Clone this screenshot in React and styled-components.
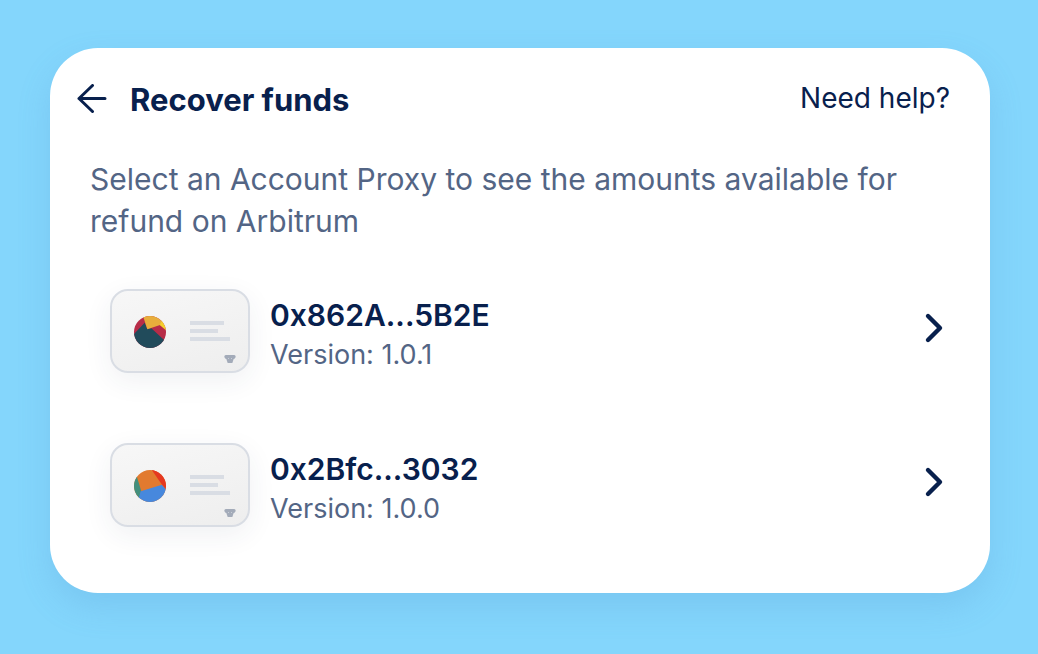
import React from "react";
import styled, { createGlobalStyle } from "styled-components";

const GlobalStyle = createGlobalStyle`
  *, *::before, *::after { box-sizing: border-box; }
  body {
    margin: 0;
    min-height: 100vh;
    background: #84d6fc;
    color: #08204d;
    font-family: Inter, "Liberation Sans", sans-serif;
  }
`;

const Page = styled.main`
  padding: 48px 48px 60px 50px;
`;

const Panel = styled.section`
  padding: 28px 40px 31px;
  border-radius: 48px;
  background: #fff;
  box-shadow: 0 14px 32px rgba(84, 144, 204, 0.22);
`;

const Header = styled.header`
  display: flex;
  align-items: center;
  gap: 22px;
  height: 48px;
  margin-left: -14px;
`;

const BackButton = styled.button`
  display: flex;
  width: 32px;
  height: 32px;
  padding: 0;
  border: 0;
  background: none;
  color: inherit;
  cursor: pointer;
`;

const Title = styled.h1`
  margin: 0;
  font-size: 31px;
  line-height: 48px;
  font-weight: 700;
`;

const HelpLink = styled.a`
  margin-left: auto;
  padding-bottom: 4px;
  color: inherit;
  font-size: 28px;
  line-height: 40px;
  text-decoration: none;
`;

const Intro = styled.p`
  margin: 34px 0 12px;
  color: #536585;
  font-size: 30px;
  line-height: 42px;
`;

const List = styled.ul`
  margin: 0;
  padding: 0;
  list-style: none;
`;

const Row = styled.button`
  display: flex;
  align-items: center;
  gap: 20px;
  width: 100%;
  height: 154px;
  padding: 0 0 0 20px;
  border: 0;
  background: none;
  color: inherit;
  font: inherit;
  text-align: left;
  cursor: pointer;
`;

const Thumb = styled.span`
  position: relative;
  display: flex;
  align-items: center;
  gap: 24px;
  flex: none;
  width: 140px;
  height: 84px;
  padding-left: 22px;
  border: 2px solid #d9dde4;
  border-radius: 18px;
  background: linear-gradient(165deg, #f7f7f7, #eeeeee);
  box-shadow: 0 8px 28px rgba(40, 50, 90, 0.07);
`;

const Picture = styled.svg`
  flex: none;
  margin-top: 2px;
`;

const Lines = styled.span`
  display: grid;
  gap: 4px;
`;

const Line = styled.span`
  width: ${({ $width }) => $width}px;
  height: 4px;
  background: #d9dde4;
`;

const Mascot = styled.svg`
  position: absolute;
  right: 12px;
  bottom: 8px;
`;

const Details = styled.span`
  display: flex;
  flex-direction: column;
  flex: 1;
  padding-top: 8px;
`;

const Name = styled.span`
  font-size: 30px;
  line-height: 40px;
  font-weight: 600;
`;

const Version = styled.span`
  color: #536585;
  font-size: 27px;
  line-height: 40px;
`;

const Chevron = styled.svg`
  flex: none;
  margin-bottom: 6px;
`;

const accounts = [
  {
    name: "0x862A...5B2E",
    version: "1.0.1",
    base: "#b72c48",
    shapes: [
      ["#214b5b", "0,54 32,20 40,39 52,37 96,77 96,96 0,96"],
      ["#e8ae3c", "27,0 40,40 78,27 90,20 90,0"],
      ["#f5cf2d", "77,27 98,44 96,10 86,10"],
    ],
  },
  {
    name: "0x2Bfc...3032",
    version: "1.0.0",
    base: "#e27a2f",
    shapes: [
      ["#438f7d", "8,18 22,64 13,96 0,96 0,18"],
      ["#4788dd", "20,64 84,44 98,60 96,96 11,96"],
      ["#e53820", "52,-2 84,44 98,60 98,-2"],
    ],
  },
];

function Avatar({ id, base, shapes }) {
  return (
    <Picture width="32" height="32" viewBox="0 0 96 96" aria-hidden="true">
      <clipPath id={id}>
        <circle cx="48" cy="48" r="48" />
      </clipPath>
      <g clipPath={`url(#${id})`}>
        <rect width="96" height="96" fill={base} />
        {shapes.map(([fill, points]) => (
          <polygon key={fill} fill={fill} points={points} />
        ))}
      </g>
    </Picture>
  );
}

function AccountRow({ account, id }) {
  return (
    <li>
      <Row type="button">
        <Thumb>
          <Avatar id={id} base={account.base} shapes={account.shapes} />
          <Lines>
            <Line $width={34} />
            <Line $width={28} />
            <Line $width={40} />
          </Lines>
          <Mascot width="12" height="8" viewBox="0 0 36 24" aria-hidden="true">
            <path
              d="M5 0H31Q36 1 35 6Q33 12 29 12L27 18L25 24H11L9 18L7 12Q3 12 1 6Q0 1 5 0Z"
              fill="#a3abb9"
            />
            <circle cx="13.5" cy="10.5" r="1.4" fill="#eef0f3" />
            <circle cx="22.5" cy="10.5" r="1.4" fill="#eef0f3" />
          </Mascot>
        </Thumb>
        <Details>
          <Name>{account.name}</Name>
          <Version>Version: {account.version}</Version>
        </Details>
        <Chevron width="32" height="32" viewBox="0 0 32 32" fill="none" aria-hidden="true">
          <path
            d="M10 4L22 16L10 28"
            stroke="currentColor"
            strokeWidth="4.4"
            strokeLinecap="round"
            strokeLinejoin="round"
          />
        </Chevron>
      </Row>
    </li>
  );
}

export default function App() {
  return (
    <>
      <GlobalStyle />
      <Page>
        <Panel>
          <Header>
            <BackButton type="button" aria-label="Back">
              <svg width="32" height="32" viewBox="0 0 32 32" fill="none" aria-hidden="true">
                <path
                  d="M16.5 1.5L3 14.5L16.5 27.5M3 14.5H29"
                  stroke="currentColor"
                  strokeWidth="3"
                  strokeLinecap="round"
                  strokeLinejoin="round"
                />
              </svg>
            </BackButton>
            <Title>Recover funds</Title>
            <HelpLink href="#help">Need help?</HelpLink>
          </Header>
          <Intro>
            Select an Account Proxy to see the amounts available for refund on Arbitrum
          </Intro>
          <List>
            {accounts.map((account, index) => (
              <AccountRow key={account.name} id={`avatar-${index}`} account={account} />
            ))}
          </List>
        </Panel>
      </Page>
    </>
  );
}
